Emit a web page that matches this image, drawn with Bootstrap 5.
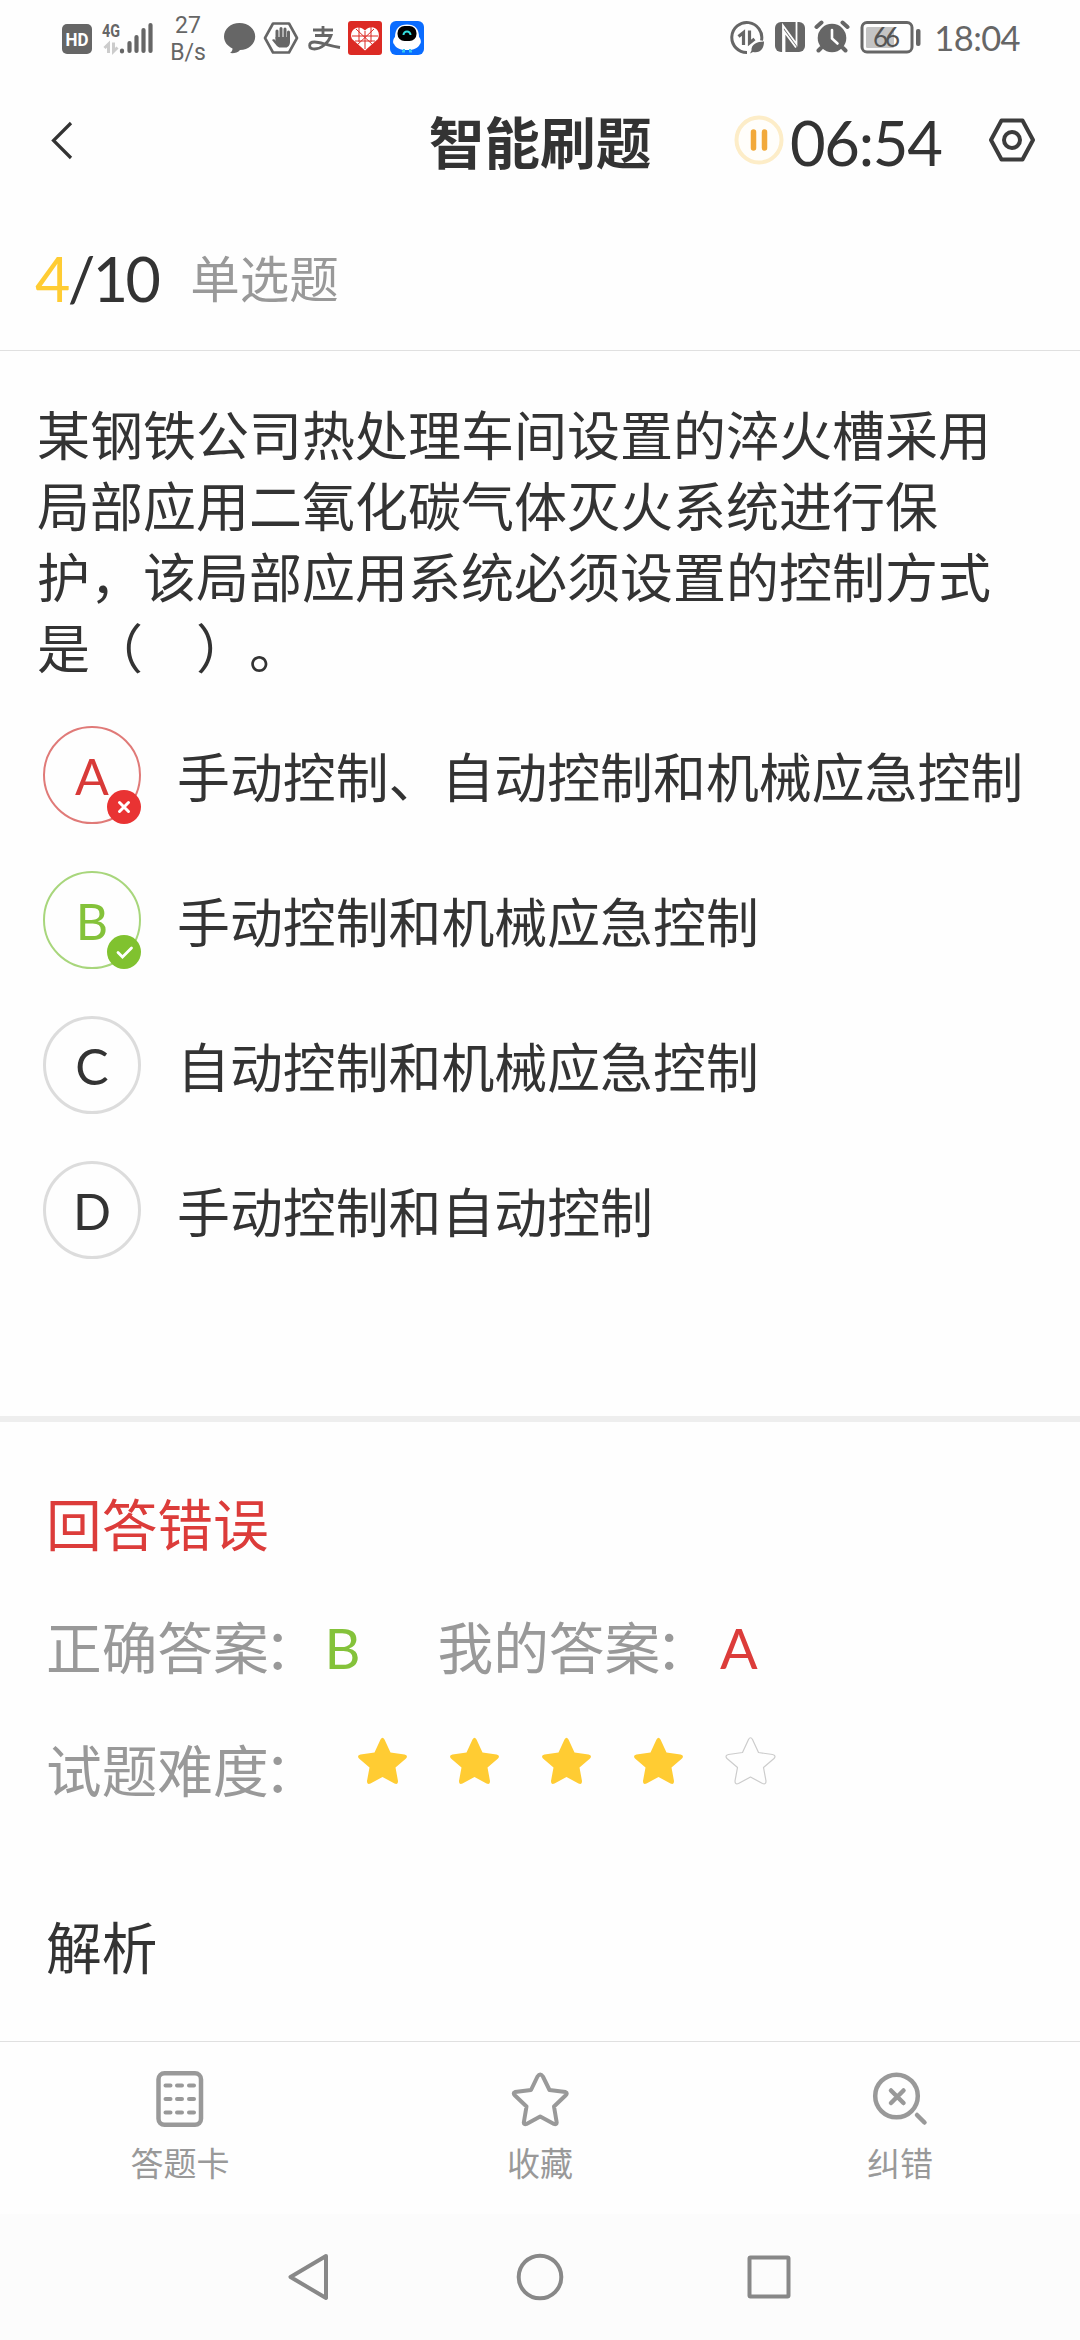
<!DOCTYPE html>
<html lang="zh-CN">
<head>
<meta charset="utf-8">
<meta name="viewport" content="width=device-width, initial-scale=1">
<title>智能刷题</title>
<link href="https://cdn.jsdelivr.net/npm/bootstrap@5.3.0/dist/css/bootstrap.min.css" rel="stylesheet">
<style>
body{width:1080px;height:2340px;overflow:hidden;background:#fefefe;color:#333;font-family:Lato,"Noto Sans CJK SC",sans-serif}
svg{display:block;flex:none}
.statusbar{height:80px;padding:0 60px 4px 61px;color:#666}
.rate{font:23px/27px Roboto,sans-serif;width:40px;text-align:center;margin-left:15px;padding-top:1px}
.clock{font-size:34.5px;line-height:40px;letter-spacing:-.6px;margin-left:13px}
.appbar{height:120px}
.title{font-size:55.7px;font-weight:700;line-height:60px;padding-top:5px}
.timer{font-size:61.5px;line-height:60px;letter-spacing:-1.3px;margin-left:5px;padding-top:4px}
.gear{margin-right:43px}
.progress-row{height:151px;border-bottom:1px solid #e0e0e0;padding:8px 0 0 35px}
.count{font-size:61px;line-height:60px;letter-spacing:-2.6px}
.kind{font-size:49.5px;line-height:60px;color:#999;margin-left:32px}
.c-yellow{color:#fc3}
.c-red{color:#dc3c3a}
.c-green{color:#84c23a}
.c-grey{color:#999}
.question{font-size:53px;line-height:71px;padding:49px 38px 0 37px;text-spacing-trim:space-all;font-feature-settings:"chws" 0,"halt" 0,"kern" 0}
.options{padding:42px 43px 0;height:732px}
.option{height:98px;margin-bottom:47px;font-size:52.9px}
.option>span{padding-top:6px}
.letter{width:98px;height:98px;border:3px solid #dcdcdc;font-size:50px;line-height:95px;margin-right:36px}
.letter.bad{border:2px solid #e07a78;color:#d83a38;line-height:97px}
.letter.good{border:2px solid #a8d67c;color:#84c23a;line-height:97px}
.flag{right:-2px;bottom:-2px}
.result{padding:0 46px;font-size:55.7px;height:625px;border-top:6px solid #eee}
.result .line{height:60px;line-height:60px}
.colon{margin:0 5px 0 -5px}
.stars{margin-top:-5px}
.tabs{height:173px;border-top:1px solid #e0e0e0;font-size:33px;line-height:40px}
.tabs svg{margin:23px 0 10px}
.sysnav{height:126px;background:#fcfcfc}
</style>
</head>
<body>
<header class="statusbar d-flex align-items-center">
  <svg width="92" height="46" viewBox="61 14 92 46">
    <rect x="62" y="23" width="30" height="30" rx="5" fill="#666"/>
    <text x="77" y="44.500" font-family="Roboto" font-weight="700" font-size="18" text-anchor="middle" fill="#fff" textLength="23" lengthAdjust="spacingAndGlyphs">HD</text>
    <text x="102" y="36" font-family="Roboto" font-weight="700" font-size="19" fill="#666" textLength="18" lengthAdjust="spacingAndGlyphs">4G</text>
    <path d="M108.500 52V43l-4 4M113.500 41.500v9l4-4" fill="none" stroke="#ccc" stroke-width="3"/>
    <path d="M122 49.500v1M129.500 42v8M136.500 36v14M143.500 29v21M150.500 24v26" stroke="#666" stroke-width="4.200" stroke-linecap="round"/>
  </svg>
  <div class="rate">27<br>B/s</div>
  <svg width="202" height="36" viewBox="223 20 202 36" style="margin-left:15px">
    <path d="M239.500 23c9 0 15.700 6 15.700 13.500S248.500 50 240 50c-2 3-7 3.500-10 3 2-1.500 2.500-3 2.500-4.500-5-2.500-8.500-6.500-8.500-12C224 29 230.500 23 239.500 23z" fill="#666"/>
    <path d="M273 23.500h16L297 38l-8 14.500h-16L265 38z" fill="none" stroke="#666" stroke-width="2.600" stroke-linejoin="round"/>
    <path d="M277 40V31M281 38V28.500M285 38V29M288.500 40v-8" stroke="#666" stroke-width="3" stroke-linecap="round"/>
    <path d="M275.500 37H290v5c0 3-2 5.500-4 5.500h-6c-2 0-4-2.500-8-7.500 1-1.500 3-1 4 1z" fill="#666"/>
    <path d="M313 30h20M323 26v9M315 35.500h16c-3 8-10 13.500-16.500 13.500-6.500 0-6.500-7 0-7 6 0 12 3.500 25.500 5.500" fill="none" stroke="#666" stroke-width="2.800"/>
    <rect x="348" y="21" width="34" height="34" rx="3" fill="#dc2a24"/>
    <path d="M365 50.500L352 39c-4-8 6-16 13-8.500 7-7.500 17-.5 13 8.500z" fill="#fff"/>
    <path d="M356 29l18 17M374 29l-18 17M352 36h26M365 31v18M355 41h20M359 27v15M371 27v15" stroke="#dc2a24" stroke-width="1"/>
    <rect x="390" y="21" width="34" height="34" rx="6" fill="#0a6cff"/>
    <path d="M395 37c0-8 4-12.500 12-12.500S419 29 419 37c2 2 2.500 6 1 7-2 4-6 6-13 6s-11-2-13-6c-1.500-1 -1-5 1-7z" fill="#fff"/>
    <rect x="397.500" y="26" width="19" height="15" rx="7" fill="#000"/>
    <path d="M403.500 35a3.500 3.500 0 0 1 7 0" fill="none" stroke="#35e0e0" stroke-width="2"/>
    <path d="M404 49v2.500h-2M410 49v2.500h2" fill="none" stroke="#35c8f0" stroke-width="2"/>
  </svg>
  <div class="ms-auto d-flex align-items-center">
    <svg width="192" height="36" viewBox="730 20 192 36">
      <path d="M748 52.500a15 15 0 1 1 14.500-12" fill="none" stroke="#666" stroke-width="3"/>
      <path d="M744.500 45V32.500l-5 4M750.500 30.500V43l5-4" fill="none" stroke="#666" stroke-width="3.200"/>
      <path d="M765 41.500c-7 0-13 3-12.500 9l-1.500 3 3-1.500c7 1.500 11-3 11-10.500z" fill="#666"/>
      <rect x="776" y="22" width="30" height="30" rx="6" fill="#666"/>
      <path d="M784 52V25.500L797.500 44V22M785.500 52V32L797 47.500" fill="none" stroke="#fff" stroke-width="1.800"/>
      <circle cx="833" cy="38" r="14.300" fill="#666"/>
      <path d="M817.500 27l5-4.500M848.500 27l-5-4.500M822 48l-2.500 2.500M844 48l2.500 2.500" stroke="#666" stroke-width="4" stroke-linecap="round"/>
      <path d="M833 30v8.500l5.500 5" fill="none" stroke="#fff" stroke-width="2.600" stroke-linecap="round"/>
      <rect x="863" y="22.500" width="50" height="29.500" rx="5" fill="none" stroke="#666" stroke-width="3"/>
      <rect x="867" y="27" width="28" height="21" rx="1.500" fill="#c4c4c4"/>
      <text x="887.500" y="46.500" font-family="Lato" font-size="26" text-anchor="middle" fill="#555" textLength="27">66</text>
      <rect x="917" y="29" width="4.500" height="17" rx="2" fill="#666"/>
    </svg>
    <span class="clock">18:04</span>
  </div>
</header>

<nav class="appbar row g-0 align-items-center">
  <div class="col-4 ps-5"><svg width="28" height="44" viewBox="48 117 28 44"><path d="M71 122L53.500 139.500 71 157" fill="none" stroke="#333" stroke-width="3.200"/></svg></div>
  <div class="col-4 text-center title">智能刷题</div>
  <div class="col-4 d-flex align-items-center">
    <svg width="52" height="52" viewBox="0 0 52 52" style="margin-left:13px"><circle cx="26" cy="26" r="22.500" fill="#fffefb" stroke="#fdedc8" stroke-width="4"/><path d="M20.500 18v16M31.500 18v16" stroke="#f2a93b" stroke-width="5.500" stroke-linecap="round"/></svg>
    <span class="timer">06:54</span>
    <svg class="gear ms-auto" width="50" height="50" viewBox="0 0 50 50"><path d="M14.500 5.500h21L46 25 35.500 44.500h-21L4 25z" fill="none" stroke="#3c3c3c" stroke-width="4" stroke-linejoin="round"/><circle cx="25" cy="25" r="8" fill="none" stroke="#3c3c3c" stroke-width="4"/></svg>
  </div>
</nav>

<section class="progress-row d-flex align-items-center">
  <div class="count"><span class="c-yellow">4</span>/10</div>
  <div class="kind">单选题</div>
</section>

<main>
  <div class="question">某钢铁公司热处理车间设置的淬火槽采用<br>局部应用二氧化碳气体灭火系统进行保<br>护，该局部应用系统必须设置的控制方式<br>是（&#12288;）<span class="d-inline-block">。</span></div>
  <div class="options">
    <div class="option d-flex align-items-center">
      <div class="letter bad rounded-circle text-center position-relative">A<svg class="flag position-absolute" width="34" height="34" viewBox="0 0 34 34"><circle cx="17" cy="17" r="17" fill="#e93333"/><path d="M12.500 12.500l9 9M21.500 12.500l-9 9" stroke="#fff" stroke-width="3" stroke-linecap="round"/></svg></div>
      <span>手动控制、自动控制和机械应急控制</span>
    </div>
    <div class="option d-flex align-items-center">
      <div class="letter good rounded-circle text-center position-relative">B<svg class="flag position-absolute" width="34" height="34" viewBox="0 0 34 34"><circle cx="17" cy="17" r="17" fill="#80c22f"/><path d="M11 17.500l4.500 4.500 9-9" fill="none" stroke="#fff" stroke-width="2.800" stroke-linecap="round"/></svg></div>
      <span>手动控制和机械应急控制</span>
    </div>
    <div class="option d-flex align-items-center"><div class="letter rounded-circle text-center">C</div><span>自动控制和机械应急控制</span></div>
    <div class="option d-flex align-items-center"><div class="letter rounded-circle text-center">D</div><span>手动控制和自动控制</span></div>
  </div>
</main>

<section class="result">
  <div class="line c-red" style="margin-top:73px">回答错误</div>
  <div class="line d-flex c-grey" style="margin-top:63px"><span>正确答案</span><span class="colon">：</span><span class="c-green">B</span><span style="margin-left:77px">我的答案</span><span class="colon">：</span><span class="c-red ms-1">A</span></div>
  <div class="line d-flex c-grey" style="margin-top:63px"><span>试题难度</span><span class="colon">：</span>
    <svg class="stars" width="460" height="60" viewBox="324 1740 460 60">
      <defs><path id="star" d="M-2-21.500Q0-25 2-21.500L8-8.500 22-6.500Q26-5.500 23.500-2.500L13 6.500 15.500 20Q15.500 24 12 22.500L0 16-12 22.500Q-15.500 24-15.500 20L-13 6.500-23.500-2.500Q-26-5.500-22-6.500L-8-8.500z" stroke-linejoin="round"/></defs>
      <g fill="#fc3"><use href="#star" x="382.500" y="1765"/><use href="#star" x="474.500" y="1765"/><use href="#star" x="566.500" y="1765"/><use href="#star" x="658.500" y="1765"/></g>
      <use href="#star" x="750.500" y="1765" fill="none" stroke="#ccc" stroke-width="1.200"/>
    </svg>
  </div>
  <div class="line" style="margin-top:117px">解析</div>
</section>

<footer>
  <div class="tabs row g-0 text-center c-grey">
    <div class="col-4 d-flex flex-column align-items-center"><svg width="60" height="68" viewBox="150 2065 60 68" fill="none" stroke="#999"><rect x="158.500" y="2073.300" width="42.500" height="51.500" rx="6" stroke-width="4.500"/><path d="M165.500 2085.500h5M177 2085.500h5M189 2085.500h5M165.500 2099h5M177 2099h5M189 2099h5M165.500 2112.500h5M177 2112.500h5M189 2112.500h5" stroke-width="4" stroke-linecap="round"/></svg>答题卡</div>
    <div class="col-4 d-flex flex-column align-items-center"><svg width="60" height="68" viewBox="509 2065 60 68" fill="none" stroke="#999" stroke-width="4" stroke-linejoin="round"><path d="M536.500 2076.500q2.700-4 5.400 0l6.600 13.500 16 2q2.500 1 0 3.500l-11.500 11 2.700 16q-.2 2.500-2.700 1.500L539.200 2116.500 525.500 2124q-2.500 1-2.700-1.500l2.700-16L514 2095.500q-2.500-2.500 0-3.500l16-2z"/></svg>收藏</div>
    <div class="col-4 d-flex flex-column align-items-center"><svg width="60" height="68" viewBox="870 2065 60 68" fill="none" stroke="#999" stroke-width="4.500" stroke-linecap="round"><circle cx="896.500" cy="2096" r="21.300"/><path d="M891 2090.500l12.500 12.500M903.500 2090.500L891 2103M917 2115l7.500 7.500"/></svg>纠错</div>
  </div>
  <div class="sysnav d-flex justify-content-center align-items-center">
    <svg width="520" height="60" viewBox="280 2247 520 60" fill="none" stroke="#888" stroke-width="4" stroke-linejoin="round"><path d="M326 2256L290.500 2277 326 2298z"/><circle cx="540" cy="2277" r="21.300"/><rect x="749.500" y="2257.500" width="39" height="39" rx="1"/></svg>
  </div>
</footer>
<script src="https://cdn.jsdelivr.net/npm/bootstrap@5.3.0/dist/js/bootstrap.bundle.min.js"></script>
</body>
</html>
